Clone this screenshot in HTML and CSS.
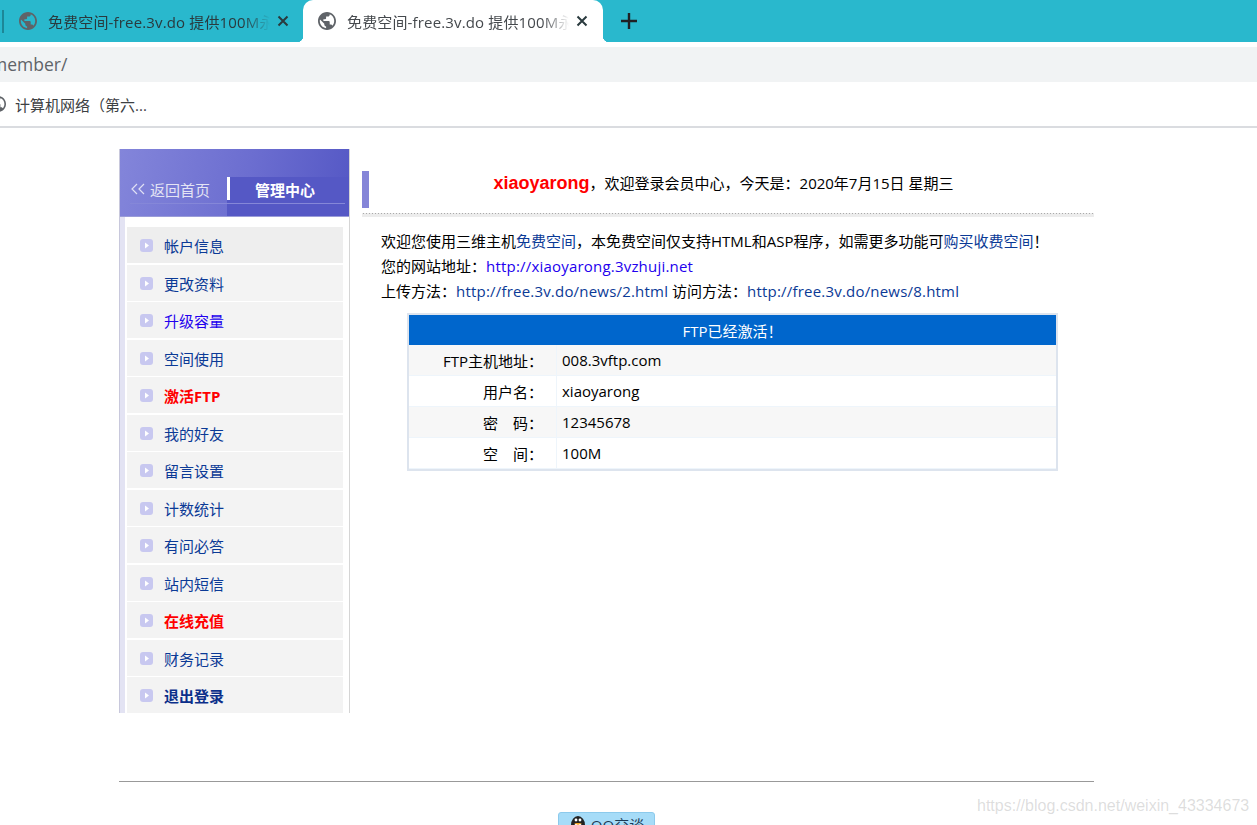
FILE: index.html
```html
<!DOCTYPE html>
<html lang="zh-CN">
<head>
  <meta charset="UTF-8" />
  <meta name="viewport" content="width=device-width, initial-scale=1.0"/>
  <title>会员中心</title>
  <link rel="stylesheet" href="styles.css">
</head>
<body>
  <svg class="icon-defs" width="0" height="0">
    <symbol id="globe" viewBox="2 2 20 20">
      <path d="M12 2C6.48 2 2 6.48 2 12s4.48 10 10 10 10-4.48 10-10S17.52 2 12 2zm-1 17.93c-3.95-.49-7-3.85-7-7.93 0-.62.08-1.21.21-1.79L9 15v1c0 1.1.9 2 2 2v1.93zm6.9-2.54c-.26-.81-1-1.39-1.9-1.39h-1v-3c0-.55-.45-1-1-1H8v-2h2c.55 0 1-.45 1-1V7h2c1.1 0 2-.9 2-2v-.41c2.93 1.19 5 4.06 5 7.41 0 2.08-.8 3.97-2.1 5.39z"/>
    </symbol>
    <symbol id="close" viewBox="0 0 12 12">
      <path d="M1.5 1.5l9 9M10.5 1.5l-9 9" fill="none" stroke="currentColor" stroke-width="2"/>
    </symbol>
    <symbol id="arrow" viewBox="0 0 13 13">
      <rect width="13" height="13" rx="3" fill="#c8c8f0"/>
      <path d="M5 3.5l4 3-4 3z" fill="#fff"/>
    </symbol>
  </svg>

  <!-- Browser chrome -->
  <div class="tabstrip">
    <div class="tab-sep"></div>
    <div class="tab">
      <svg class="tab-globe"><use href="#globe"/></svg>
      <span class="tab-title">免费空间-free.3v.do 提供100M永久免费</span>
      <svg class="tab-close"><use href="#close"/></svg>
    </div>
    <div class="tab tab-active">
      <svg class="tab-globe"><use href="#globe"/></svg>
      <span class="tab-title">免费空间-free.3v.do 提供100M永久免费</span>
      <svg class="tab-close"><use href="#close"/></svg>
    </div>
    <div class="tab-new">
      <svg width="16" height="16" viewBox="0 0 16 16"><path d="M8 0v16M0 8h16" stroke="#202124" stroke-width="2.4"/></svg>
    </div>
  </div>
  <div class="toolbar"><span class="url">member/</span></div>
  <div class="bookmarks">
    <svg class="bookmark-globe"><use href="#globe"/></svg>
    <span>计算机网络（第六...</span>
  </div>

  <!-- Page -->
  <div class="page">
    <div class="columns">
      <div class="sidebar">
        <div class="side-head">
          <a class="side-home">
            <svg width="16" height="12" viewBox="0 0 16 12"><path d="M7 1L2 6l5 5M14 1L9 6l5 5" fill="none" stroke="#e0e0f4" stroke-width="1.2"/></svg>
            返回首页
          </a>
          <div class="side-right">
            <div class="side-current">管理中心</div>
          </div>
        </div>
        <ul class="side-menu">
          <li class="side-item side-item-first"><svg class="arrow"><use href="#arrow"/></svg><a>帐户信息</a></li>
          <li class="side-item"><svg class="arrow"><use href="#arrow"/></svg><a>更改资料</a></li>
          <li class="side-item"><svg class="arrow"><use href="#arrow"/></svg><a class="blue">升级容量</a></li>
          <li class="side-item"><svg class="arrow"><use href="#arrow"/></svg><a>空间使用</a></li>
          <li class="side-item"><svg class="arrow"><use href="#arrow"/></svg><a class="red">激活FTP</a></li>
          <li class="side-item"><svg class="arrow"><use href="#arrow"/></svg><a>我的好友</a></li>
          <li class="side-item"><svg class="arrow"><use href="#arrow"/></svg><a>留言设置</a></li>
          <li class="side-item"><svg class="arrow"><use href="#arrow"/></svg><a>计数统计</a></li>
          <li class="side-item"><svg class="arrow"><use href="#arrow"/></svg><a>有问必答</a></li>
          <li class="side-item"><svg class="arrow"><use href="#arrow"/></svg><a>站内短信</a></li>
          <li class="side-item"><svg class="arrow"><use href="#arrow"/></svg><a class="red">在线充值</a></li>
          <li class="side-item"><svg class="arrow"><use href="#arrow"/></svg><a>财务记录</a></li>
          <li class="side-item"><svg class="arrow"><use href="#arrow"/></svg><a class="bold">退出登录</a></li>
        </ul>
      </div>

      <div class="main">
        <div class="welcome">
          <div class="welcome-bar"></div>
          <div class="welcome-text"><b>xiaoyarong</b>，欢迎登录会员中心，今天是：2020年7月15日 星期三</div>
        </div>
        <div class="intro">
          <p>欢迎您使用三维主机<a>免费空间</a>，本免费空间仅支持HTML和ASP程序，如需更多功能可<a>购买收费空间</a>！</p>
          <p>您的网站地址：<a class="site-link">http://xiaoyarong.3vzhuji.net</a></p>
          <p>上传方法：<a>http://free.3v.do/news/2.html</a> 访问方法：<a>http://free.3v.do/news/8.html</a></p>
        </div>
        <table class="ftp-table">
          <colgroup><col class="col-label"><col></colgroup>
          <tr><th colspan="2">FTP已经激活！</th></tr>
          <tr class="odd"><td class="label">FTP主机地址：</td><td>008.3vftp.com</td></tr>
          <tr><td class="label">用户名：</td><td>xiaoyarong</td></tr>
          <tr class="odd"><td class="label">密　码：</td><td>12345678</td></tr>
          <tr><td class="label">空　间：</td><td>100M</td></tr>
        </table>
      </div>
    </div>

    <div class="footer">
      <a class="qq-btn">
        <svg width="18" height="20" viewBox="0 0 18 20">
          <ellipse cx="9" cy="11" rx="7" ry="9" fill="#222"/>
          <ellipse cx="9" cy="14" rx="4.5" ry="5" fill="#fff"/>
          <circle cx="7" cy="6" r="1.4" fill="#fff"/>
          <circle cx="11" cy="6" r="1.4" fill="#fff"/>
          <path d="M5 9h8l-4 2z" fill="#f5a623"/>
        </svg>
        QQ交谈
      </a>
    </div>
  </div>

  <div class="watermark">https://blog.csdn.net/weixin_43334673</div>
</body>
</html>
```

FILE: styles.css
```css
html, body {
  height: 825px;
  overflow: hidden;
}

body {
  margin: 0;
  font-family: "Open Sans", "Noto Sans CJK SC", sans-serif;
  font-size: 15px;
  color: #000;
  background: #fff;
}

.icon-defs {
  position: absolute;
}

/* browser chrome */
.tabstrip {
  height: 42px;
  background: #29b8cd;
  display: flex;
  align-items: stretch;
  overflow: hidden;
}

.tab-sep {
  width: 2px;
  height: 23px;
  margin: 10px 0 0 2px;
  background: #1d8797;
}

.tab {
  width: 299px;
  box-sizing: border-box;
  padding: 0 14px 0 15px;
  display: flex;
  align-items: center;
  position: relative;
  color: #2a3a3e;
  flex-shrink: 0;
}

.tab-active {
  width: 300px;
  background: #fff;
  border-radius: 10px 10px 0 0;
  padding: 0 15px 0 15px;
  color: #45494d;
}

.tab-active::before,
.tab-active::after {
  content: "";
  position: absolute;
  bottom: 0;
  width: 6px;
  height: 6px;
}

.tab-active::before {
  left: -6px;
  background: radial-gradient(circle at 0 0, transparent 6px, #fff 6.5px);
}

.tab-active::after {
  right: -6px;
  background: radial-gradient(circle at 100% 0, transparent 6px, #fff 6.5px);
}

.tab-globe {
  width: 18px;
  height: 18px;
  fill: #5f6368;
  flex-shrink: 0;
}

.tab-title {
  margin-left: 11px;
  width: 222px;
  letter-spacing: 0.15px;
  white-space: nowrap;
  overflow: hidden;
  flex-shrink: 0;
  -webkit-mask-image: linear-gradient(to right, #000 88%, transparent 100%);
  mask-image: linear-gradient(to right, #000 88%, transparent 100%);
}

.tab-close {
  width: 12px;
  height: 12px;
  margin-left: auto;
  color: #2a3a3e;
  flex-shrink: 0;
}

.tab-new {
  margin-left: 18px;
  display: flex;
  align-items: center;
}

.toolbar {
  margin-top: 5px;
  height: 35px;
  background: #f1f3f4;
  display: flex;
  align-items: center;
  overflow: hidden;
}

.url {
  margin-left: -9px;
  margin-top: -2px;
  font-size: 17.5px;
  color: #5f6368;
}

.bookmarks {
  height: 46px;
  box-sizing: border-box;
  border-bottom: 2px solid #dadce0;
  display: flex;
  align-items: center;
  gap: 9px;
  overflow: hidden;
  color: #3c4043;
}

.bookmark-globe {
  width: 16px;
  height: 16px;
  margin-left: -10px;
  fill: #5f6368;
  flex-shrink: 0;
}

/* page */
.page {
  width: 975px;
  margin: 21px 0 0 119px;
}

.columns {
  display: flex;
  height: 564px;
  gap: 12px;
}

.sidebar {
  width: 231px;
  box-sizing: border-box;
  border-left: 1px solid #c8c8dc;
  border-right: 1px solid #d5d5d5;
  flex-shrink: 0;
  background: linear-gradient(to right, #e3e3f3 5px, #fff 5px);
}

.side-head {
  height: 68px;
  box-sizing: border-box;
  background: linear-gradient(100deg, #8385da 0%, #6c6ed0 55%, #5558c5 100%);
  border-bottom: 1px solid #9a9cd8;
  padding: 28px 0 0 10px;
  display: flex;
  align-items: flex-start;
}

.side-home {
  width: 97px;
  height: 27px;
  box-sizing: border-box;
  border-bottom: 1px solid #8587d8;
  color: #e4e4f4;
  display: flex;
  align-items: center;
  gap: 4px;
  white-space: nowrap;
  padding-bottom: 2px;
}

.side-right {
  flex: 1;
  height: 39px;
  background: #5558c5;
  padding-right: 4px;
}

.side-current {
  height: 27px;
  box-sizing: border-box;
  border-bottom: 1px solid #8587d8;
  color: #fff;
  font-weight: bold;
  line-height: 26px;
  text-align: center;
  padding-right: 2px;
  background: linear-gradient(#fff, #fff) 0 0 / 3px 23px no-repeat;
}

.side-menu {
  list-style: none;
  margin: 0;
  padding: 10px 6px 0 7px;
  display: grid;
  grid-auto-rows: 36px;
  row-gap: 1.5px;
}

.side-item {
  background: #f3f3f3;
  display: flex;
  padding-left: 13px;
  line-height: 39px;
}

.side-item-first {
  background: #eee;
}

.side-item a {
  margin-left: 11px;
  color: #0b3a96;
}

.side-item a.blue {
  color: #2200ee;
}

.side-item a.red {
  color: #f00;
  font-weight: bold;
}

.side-item a.bold {
  color: #0b2f8a;
  font-weight: bold;
}

.arrow {
  width: 13px;
  height: 13px;
  margin-top: 12px;
  flex-shrink: 0;
}

.main {
  flex: 1;
}

.welcome {
  margin-top: 22px;
  height: 46px;
  display: flex;
  align-items: flex-start;
  background:
    radial-gradient(circle, #aaa 0.8px, transparent 1px) 0 41px / 3px 3px repeat-x,
    linear-gradient(#ececec, #ececec) 0 42px / 100% 4px no-repeat;
}

.welcome-bar {
  width: 7px;
  height: 37px;
  background: #8585d8;
  flex-shrink: 0;
}

.welcome-text {
  flex: 1;
  text-align: center;
  line-height: 24px;
  padding-right: 16px;
}

.welcome-text b {
  font-family: "Liberation Sans", sans-serif;
  font-size: 18px;
  color: #f00;
}

.intro {
  margin: 12px 0 0 19px;
  line-height: 25px;
}

.intro p {
  margin: 0;
}

.intro a {
  color: #0b3a96;
}

.intro p a[class], .intro p:nth-child(3) a {
  letter-spacing: 0.2px;
}

.intro a.site-link {
  color: #2200ee;
}

.ftp-table {
  margin: 9px 0 0 45px;
  width: 651px;
  border-collapse: separate;
  border-spacing: 0;
  border: 2px solid #dde4ee;
  table-layout: fixed;
}

.col-label {
  width: 148px;
}

.ftp-table th {
  height: 30px;
  padding: 0;
  background: #0066cc;
  color: #fff;
  font-weight: normal;
}

.ftp-table td {
  height: 30px;
  padding: 0 5px;
  border-bottom: 1px solid #eef5fb;
}

.ftp-table .label {
  text-align: right;
  padding-right: 13px;
  border-right: 1px solid #eef5fb;
}

.ftp-table .odd {
  background: #f7f7f7;
}

.footer {
  margin-top: 68px;
  border-top: 1px solid #999;
  padding-top: 30px;
  display: flex;
  justify-content: center;
}

.qq-btn {
  width: 97px;
  height: 24px;
  box-sizing: border-box;
  background: #a6dcf8;
  border: 1px solid #8ccaec;
  border-radius: 3px;
  display: flex;
  align-items: center;
  justify-content: center;
  gap: 4px;
  color: #1c3a55;
}

.watermark {
  position: absolute;
  left: 977px;
  top: 797px;
  font-family: "Liberation Sans", sans-serif;
  font-size: 16px;
  color: rgba(120, 120, 120, 0.25);
  white-space: nowrap;
}
```
